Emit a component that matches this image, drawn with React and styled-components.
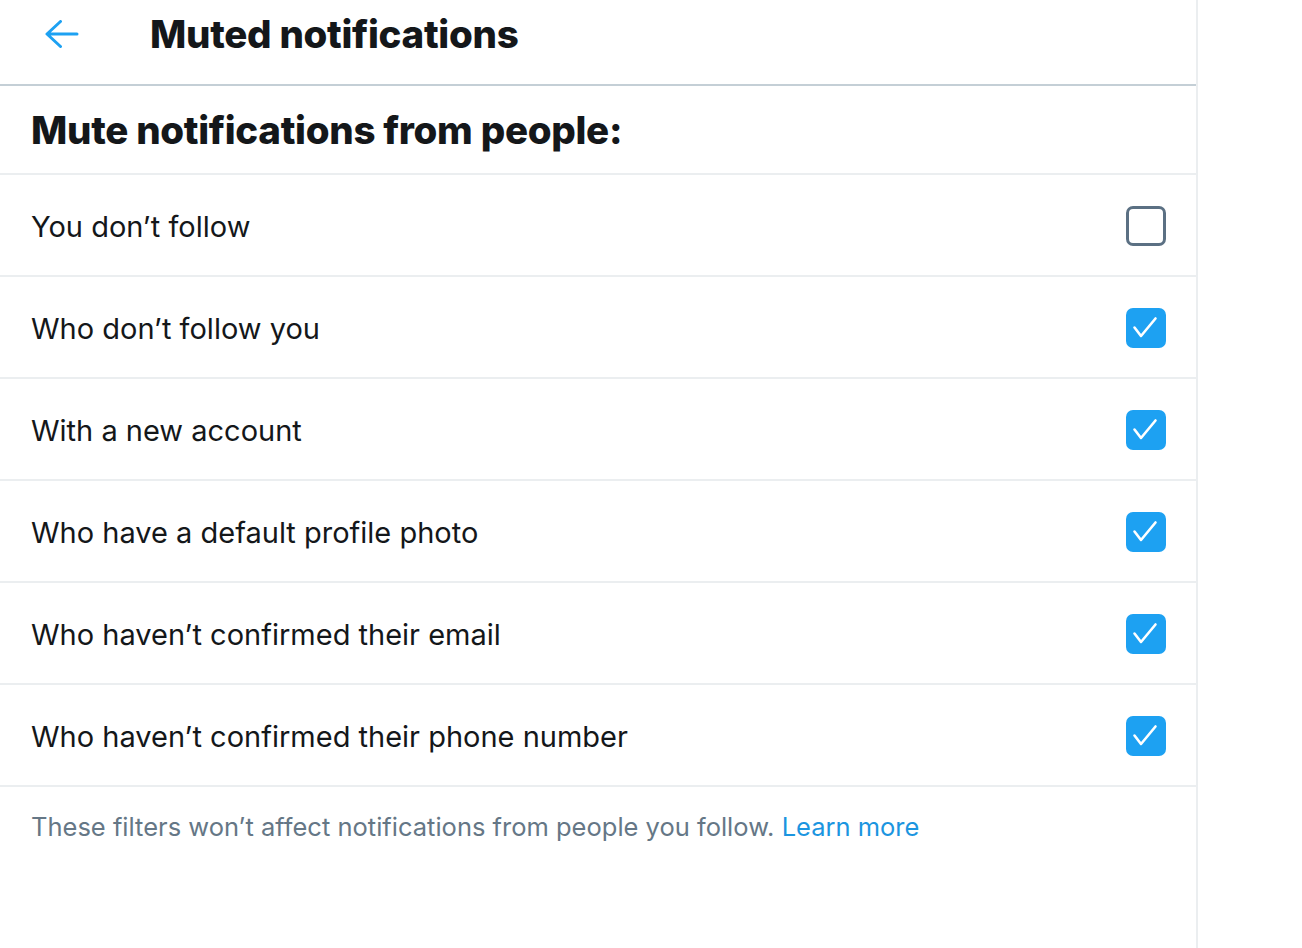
import React from "react";
import styled, { createGlobalStyle } from "styled-components";

const Global = createGlobalStyle`
  html, body { margin: 0; padding: 0; background: #ffffff; }
  body { font-family: Inter, "Noto Sans", sans-serif; color: #14171a; }
`;

const Page = styled.div`
  display: flex;
  min-height: 948px;
`;

const Panel = styled.main`
  width: 1196px;
  border-right: 2px solid #ebeef0;
  display: flex;
  flex-direction: column;
`;

const Header = styled.header`
  height: 67px;
  padding-bottom: 17px;
  display: flex;
  align-items: center;
  border-bottom: 2px solid #c4cfd6;
`;

const BackButton = styled.button`
  width: 60px;
  height: 60px;
  margin-left: 32px;
  margin-right: 58px;
  border: none;
  background: transparent;
  padding: 0;
  display: flex;
  align-items: center;
  justify-content: center;
  color: #1da1f2;
  cursor: pointer;
`;

const Title = styled.h1`
  margin: 0;
  font-size: 38.5px;
  font-weight: 800;
  letter-spacing: -0.3px;
  color: #14171a;
`;

const SectionHeading = styled.h2`
  margin: 0;
  height: 89px;
  display: flex;
  align-items: center;
  padding-left: 31px;
  font-size: 38.5px;
  font-weight: 800;
  letter-spacing: -0.3px;
  border-bottom: 2px solid #ebeef0;
  box-sizing: border-box;
`;

const Row = styled.label`
  height: 102px;
  box-sizing: border-box;
  display: flex;
  align-items: center;
  justify-content: space-between;
  padding: 0 30px 0 31px;
  border-bottom: 2px solid #ebeef0;
  font-size: 29px;
  color: #14171a;
  cursor: pointer;
`;

const RowText = styled.span`
  padding-top: 3px;
`;

const Box = styled.span`
  width: 40px;
  height: 40px;
  box-sizing: border-box;
  border-radius: 7px;
  display: flex;
  align-items: center;
  justify-content: center;
  background: ${(p) => (p.$checked ? "#1da1f2" : "#ffffff")};
  border: ${(p) => (p.$checked ? "none" : "3px solid #5b7083")};
  margin-top: 2px;
`;

const Footer = styled.p`
  margin: 0;
  padding: 24px 31px;
  font-size: 25.5px;
  color: #657786;
`;

const Link = styled.a`
  color: #1b95e0;
  text-decoration: none;
`;

const ArrowIcon = () => (
  <svg width="34" height="28" viewBox="0 0 34 28" fill="none">
    <path
      d="M32 14H2.5M15.5 1.5L2 14L15.5 26.5"
      stroke="currentColor"
      strokeWidth="3"
      strokeLinecap="round"
      strokeLinejoin="round"
    />
  </svg>
);

const Check = () => (
  <svg width="40" height="40" viewBox="0 0 40 40" fill="none">
    <path
      d="M8.5 19.5L15 28L29.5 10.5"
      stroke="#ffffff"
      strokeWidth="2.6"
      strokeLinecap="round"
      strokeLinejoin="round"
    />
  </svg>
);

const items = [
  { label: "You don’t follow", checked: false },
  { label: "Who don’t follow you", checked: true },
  { label: "With a new account", checked: true },
  { label: "Who have a default profile photo", checked: true },
  { label: "Who haven’t confirmed their email", checked: true },
  { label: "Who haven’t confirmed their phone number", checked: true },
];

export default function App() {
  return (
    <>
      <Global />
      <Page>
        <Panel>
          <Header>
            <BackButton aria-label="Back">
              <ArrowIcon />
            </BackButton>
            <Title>Muted notifications</Title>
          </Header>
          <SectionHeading>Mute notifications from people:</SectionHeading>
          {items.map((it) => (
            <Row key={it.label}>
              <RowText>{it.label}</RowText>
              <Box $checked={it.checked}>{it.checked && <Check />}</Box>
            </Row>
          ))}
          <Footer>
            These filters won’t affect notifications from people you follow.{" "}
            <Link href="#">Learn more</Link>
          </Footer>
        </Panel>
      </Page>
    </>
  );
}
